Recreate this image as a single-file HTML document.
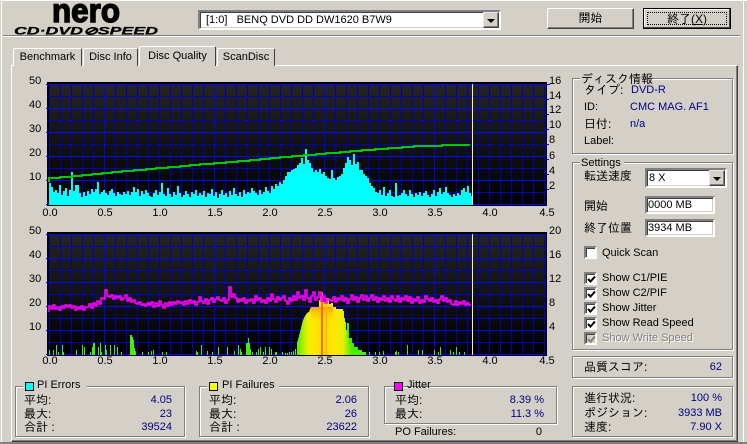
<!DOCTYPE html>
<html><head><meta charset="utf-8"><style>
html,body{margin:0;padding:0}
body{width:747px;height:444px;overflow:hidden;position:relative;background:#d4d0c8;font-family:"Liberation Sans","IPAGothic","Noto Sans CJK JP",sans-serif;font-size:11px;color:#000}
.t{position:absolute;white-space:nowrap;line-height:14px;height:14px}
.j{font-size:12px}
.r{text-align:right}
.b{color:#000080}
.c{text-align:center;width:30px}
.box{position:absolute;box-sizing:border-box}
.g{position:absolute;box-sizing:border-box;border:1px solid #808080;box-shadow:1px 1px 0 #fff,inset 1px 1px 0 #fff}
.gap{position:absolute;background:#d4d0c8;height:3px}
.tab{position:absolute;box-sizing:border-box;background:#d4d0c8;border:1px solid #fff;border-bottom:0;border-right:1px solid #404040;border-radius:2px 2px 0 0;text-align:center;line-height:16px}
.sunk{position:absolute;box-sizing:border-box;background:#fff;border:2px solid;border-color:#808080 #fff #fff #808080;box-shadow:inset 1px 1px 0 #404040,inset -1px -1px 0 #d4d0c8}
.ck{position:absolute;left:584px;width:13px;height:13px;box-sizing:border-box;background:#fff;border:2px solid;border-color:#808080 #fff #fff #808080;box-shadow:inset 1px 1px 0 #404040}
.ck svg{position:absolute;left:1px;top:1px}
.btn{position:absolute;box-sizing:border-box;background:#d4d0c8;border:1px solid;border-color:#fff #404040 #404040 #fff;box-shadow:inset -1px -1px 0 #808080;text-align:center;line-height:18px}
.arr{position:absolute;box-sizing:border-box;background:#d4d0c8;border:1px solid;border-color:#e8e8e8 #404040 #404040 #e8e8e8;box-shadow:inset -1px -1px 0 #808080}
.arr:after{content:"";position:absolute;left:3px;top:6px;border-left:4px solid transparent;border-right:4px solid transparent;border-top:4px solid #000}
.sq{position:absolute;width:7px;height:7px;border:1px solid #000}
</style></head><body>

<!-- window edges -->
<div class="box" style="left:0;top:0;width:747px;height:1px;background:#fff"></div>
<div class="box" style="left:1px;top:0;width:1px;height:444px;background:#fff"></div>
<div class="box" style="left:743px;top:0;width:1px;height:444px;background:#fff"></div>
<div class="box" style="left:3px;top:35px;width:737px;height:1px;background:#808080"></div>
<div class="box" style="left:3px;top:36px;width:737px;height:1px;background:#fff"></div>
<div class="box" style="left:0;top:442px;width:747px;height:2px;background:#808080"></div>

<!-- logo -->
<svg style="position:absolute;left:0;top:0" width="170" height="40">
<text x="52" y="22" font-family="Liberation Sans" font-weight="bold" font-size="33" textLength="68" lengthAdjust="spacingAndGlyphs" stroke="#000" stroke-width="1.4">nero</text>
<text x="14" y="34.500" font-family="Liberation Sans" font-weight="bold" font-style="italic" font-size="11" textLength="144" lengthAdjust="spacingAndGlyphs" stroke="#000" stroke-width=".3">CD·DVD⊘SPEED</text>
</svg>

<!-- drive combo -->
<div class="sunk" style="left:198px;top:10px;width:303px;height:20px"></div>
<div class="arr" style="left:483px;top:12px;width:16px;height:16px"></div>
<div class="t" style="left:206px;top:13px">[1:0]&nbsp;&nbsp;&nbsp;BENQ DVD DD DW1620 B7W9</div>

<!-- buttons -->
<div class="btn j" style="left:547px;top:8px;width:87px;height:21px">開始</div>
<div class="btn j" style="left:643px;top:8px;width:88px;height:21px;border:1px solid #000;box-shadow:inset -1px -1px 0 #404040,inset 1px 1px 0 #fff"><div style="position:absolute;left:3px;top:3px;right:3px;bottom:3px;border:1px dotted #000;line-height:13px">終了(<u>X</u>)</div></div>

<!-- tab page -->
<div class="box" style="left:11px;top:65px;width:727px;height:377px;border:1px solid;border-color:#fff #404040 #404040 #fff;box-shadow:inset -1px -1px 0 #808080"></div>
<div class="tab" style="left:13px;top:48px;width:69px;height:18px">Benchmark</div>
<div class="tab" style="left:83px;top:48px;width:55px;height:18px">Disc Info</div>
<div class="tab" style="left:139px;top:46px;width:77px;height:20px;line-height:18px;border-bottom:0;z-index:2">Disc Quality</div>
<div class="tab" style="left:217px;top:48px;width:58px;height:18px">ScanDisc</div>

<!-- charts -->
<svg style="position:absolute;left:0;top:0" width="747" height="444" shape-rendering="crispEdges">
<defs>
<linearGradient id="bg1" x1="0" y1="84" x2="0" y2="205" gradientUnits="userSpaceOnUse"><stop offset="0" stop-color="#242424"/><stop offset="1" stop-color="#000"/></linearGradient>
<linearGradient id="bg2" x1="0" y1="234" x2="0" y2="355" gradientUnits="userSpaceOnUse"><stop offset="0" stop-color="#242424"/><stop offset="1" stop-color="#000"/></linearGradient>
<pattern id="gr1" patternUnits="userSpaceOnUse" x="49" y="84" width="11" height="12"><rect width="1" height="12" fill="#0000b4"/><rect width="11" height="1" fill="#0000b4"/></pattern>
<pattern id="gr2" patternUnits="userSpaceOnUse" x="49" y="234" width="11" height="12"><rect width="1" height="12" fill="#0000b4"/><rect width="11" height="1" fill="#0000b4"/></pattern>
<linearGradient id="hump" x1="297" y1="0" x2="352" y2="0" gradientUnits="userSpaceOnUse">
<stop offset="0" stop-color="#50f000"/><stop offset=".1" stop-color="#a0f000"/><stop offset=".2" stop-color="#f0f000"/><stop offset=".3" stop-color="#ffe800"/><stop offset=".5" stop-color="#ffd800"/><stop offset=".7" stop-color="#ffe800"/><stop offset=".84" stop-color="#e8f000"/><stop offset=".92" stop-color="#90f000"/><stop offset="1" stop-color="#50f000"/></linearGradient>
<linearGradient id="top" x1="0" y1="307" x2="0" y2="322" gradientUnits="userSpaceOnUse"><stop offset="0" stop-color="#ffa000"/><stop offset="1" stop-color="#ffd800" stop-opacity="0"/></linearGradient>
</defs>
<rect x="47" y="82" width="500" height="124" fill="#000"/>
<rect x="49" y="84" width="497" height="121" fill="url(#bg1)"/>
<rect x="49" y="84" width="497" height="121" fill="url(#gr1)"/>
<rect x="47" y="232" width="500" height="124" fill="#000"/>
<rect x="49" y="234" width="497" height="121" fill="url(#bg2)"/>
<rect x="49" y="234" width="497" height="121" fill="url(#gr2)"/>
<path d="M46 84.500H546M46 108.500H546M46 132.500H546M46 156.500H546M46 180.500H546M46 204.500H546M46 234.500H546M46 258.500H546M46 282.500H546M46 306.500H546M46 330.500H546M46 354.500H546M104.500 84V205M214.500 84V205M324.500 84V205M434.500 84V205M104.500 234V355M214.500 234V355M324.500 234V355M434.500 234V355M546 84.500H550M546 99.500H549M546 114.500H549M546 129.500H549M546 144.500H549M546 159.500H549M546 174.500H549M546 189.500H549" stroke="#0000ff" stroke-width="1" fill="none"/>

<!-- PI errors top -->
<path fill="#00ffff" d="M49 205V183h2V187h2V192h2V190h2V193h2V185h2V195h2V191h2V188h2V196h2V190h2V172h2V191h2V185h2V185h2V193h2V197h2V192h2V196h2V191h2V205Z
M89 205V194h2V189h2V192h2V189h2V182h2V194h2V192h2V190h2V193h2V195h2V191h2V189h2V193h2V196h2V192h2V194h2V195h2V192h2V194h2V191h2V205Z
M129 205V195h2V192h2V187h2V192h2V189h2V196h2V191h2V194h2V190h2V193h2V196h2V197h2V193h2V190h2V195h2V192h2V183h2V194h2V196h2V188h2V205Z
M169 205V194h2V197h2V192h2V195h2V186h2V193h2V197h2V195h2V191h2V194h2V197h2V192h2V194h2V190h2V196h2V193h2V195h2V191h2V197h2V193h2V205Z
M209 205V194h2V189h2V196h2V192h2V198h2V194h2V190h2V195h2V193h2V197h2V191h2V195h2V188h2V194h2V196h2V192h2V197h2V190h2V194h2V192h2V205Z
M249 205V193h2V188h2V191h2V193h2V195h2V190h2V194h2V192h2V187h2V191h2V193h2V186h2V189h2V184h2V186h2V182h2V184h2V180h2V176h2V172h2V205Z
M289 205V172h2V170h2V169h2V168h2V165h2V163h2V158h2V164h2V149h2V160h2V163h2V168h2V172h2V170h2V172h2V169h2V174h2V172h2V176h2V178h2V205Z
M329 205V179h2V170h2V178h2V180h2V177h2V176h2V174h2V168h2V163h2V157h2V160h2V165h2V154h2V164h2V162h2V170h2V170h2V174h2V176h2V178h2V205Z
M369 205V183h2V186h2V188h2V192h2V193h2V190h2V195h2V187h2V196h2V193h2V190h2V196h2V197h2V183h2V196h2V195h2V193h2V190h2V194h2V196h2V205Z
M409 205V190h2V194h2V197h2V193h2V195h2V192h2V196h2V193h2V191h2V195h2V197h2V194h2V190h2V196h2V192h2V188h2V194h2V192h2V187h2V193h2V205Z
M449 205V195h2V197h2V194h2V196h2V193h2V195h2V190h2V188h2V192h2V186h2V193h2V196h2V205Z"/>
<!-- read speed green top -->
<path fill="none" stroke="#00c800" stroke-width="2" d="M49 182V178H60V177H72V176H82V175H92V174H102V173H112V172H122V171H134V170H146V169H156V168H168V167H180V166H190V165H200V164H214V163H226V162H238V161H250V160H260V159H270V158H280V157H292V156H304V155H316V154H326V153H340V152H350V151H362V150H375V149H388V148H402V147H414V146H430V146H442V145H456V145H470"/>

<!-- green PIF bars -->
<path fill="none" stroke="#44f000" stroke-width="1" d="M49.500 355v-5M53.500 355v-5M56.500 355v-10M58.500 355v-3M62.500 355v-10M63.500 355v-3M76.500 355v-5M82.500 355v-10M84.500 355v-8M90.500 355v-3M92.500 355v-8M93.500 355v-12M94.500 355v-12M98.500 355v-8M100.500 355v-12M101.500 355v-3M105.500 355v-10M106.500 355v-5M110.500 355v-10M114.500 355v-10M117.500 355v-8M121.500 355v-3M142.500 355v-3M148.500 355v-3M151.500 355v-4M153.500 355v-5M162.500 355v-3M166.500 355v-3M196.500 355v-4M197.500 355v-3M201.500 355v-10M207.500 355v-4M212.500 355v-3M218.500 355v-8M227.500 355v-8M234.500 355v-4M238.500 355v-10M240.500 355v-6M241.500 355v-3M252.500 355v-3M256.500 355v-3M258.500 355v-6M260.500 355v-8M263.500 355v-3M265.500 355v-8M269.500 355v-8M271.500 355v-6M275.500 355v-3M276.500 355v-3M282.500 355v-3M285.500 355v-2M287.500 355v-2M289.500 355v-3M291.500 355v-3M293.500 355v-4M295.500 355v-6M369.500 355v-3M375.500 355v-3M379.500 355v-3M383.500 355v-4M395.500 355v-3M396.500 355v-4M398.500 355v-3M407.500 355v-10M418.500 355v-5M422.500 355v-5M434.500 355v-5M438.500 355v-3M440.500 355v-8M450.500 355v-5M453.500 355v-3M456.500 355v-8M459.500 355v-3M464.500 355v-3"/>
<path fill="#44f000" d="M130 355V335H132V337H133V340H134V348H135V351H136V355ZM246 355V343H248V338H249V343H250V349H251V355ZM347 355V323H349V338H352V343H354V347H358V350H362V352H366V355Z"/>
<path fill="url(#hump)" d="M297 355V343L299 336 301 328 303 320 305 316 307 313 309 312 311 307H319V300H320V296H323V302H326V305H327V298H329V304H331V303H333V307H336V309H343V311H344V318H345V322H346V330H347V338H349V345H351V355Z"/>
<rect x="311" y="307" width="22" height="15" fill="url(#top)"/>
<rect x="321" y="292" width="2" height="63" fill="#ff6a00"/>
<rect x="326" y="298" width="1" height="57" fill="#ffb000"/>

<!-- jitter -->
<path shape-rendering="auto" fill="none" stroke="#ff00ff" stroke-width="1.6" d="M49 312V306h2V309h2V305h2V309h2V307h2V310h2V306h2V308h2V305h2V307h2V305h2V308h2V306h2V310h2V307h2V309h2V306h2V310h2V307
H89V304h2V308h2V303h2V306h2V301h2V304h2V298h2V299h2V290h2V296h2V297h2V295h2V299h2V296h2V298h2V296h2V300h2V298h2V295h2V301
H129V298h2V302h2V300h2V303h2V304h2V302h2V305h2V304h2V306h2V303h2V305h2V302h2V307h2V303h2V306h2V301h2V305h2V308h2V303h2V306
H169V302h2V305h2V302h2V304h2V301h2V303h2V302h2V305h2V301h2V304h2V300h2V303h2V301h2V305h2V302h2V297h2V301h2V303h2V299h2V304
H209V300h2V298h2V302h2V299h2V297h2V300h2V301h2V298h2V303h2V300h2V287h2V297h2V294h2V298h2V302h2V299h2V301h2V298h2V303h2V300
H249V301h2V299h2V303h2V296h2V300h2V298h2V302h2V300h2V303h2V298h2V301h2V294h2V299h2V302h2V297h2V300h2V298h2V296h2V301h2V304
H289V298h2V301h2V296h2V300h2V292h2V298h2V296h2V300h2V290h2V298h2V302h2V296h2V292h2V300h2V297h2V292h2V301h2V296h2V303h2V299
H329V300h2V301h2V297h2V302h2V298h2V300h2V296h2V301h2V298h2V303h2V299h2V295h2V300h2V297h2V302h2V298h2V295h2V300h2V296h2V301
H369V298h2V295h2V300h2V297h2V302h2V298h2V300h2V296h2V301h2V298h2V302h2V296h2V299h2V301h2V296h2V302h2V298h2V300h2V296h2V301
H409V297h2V303h2V299h2V301h2V297h2V303h2V300h2V302h2V296h2V299h2V301h2V298h2V302h2V300h2V303h2V299h2V296h2V301h2V298h2V302
H449V300h2V304h2V305h2V301h2V305h2V302h2V304h2V301h2V305h2V303h2V305h2"/>

<path d="M472.500 84V205M472.500 234V355" stroke="#f0f0e0" stroke-width="1"/>
</svg>

<!-- axis labels -->
<div class="t" style="left:29px;top:74px">50</div><div class="t" style="left:29px;top:98px">40</div><div class="t" style="left:29px;top:122px">30</div><div class="t" style="left:29px;top:146px">20</div><div class="t" style="left:29px;top:170px">10</div>
<div class="t" style="left:549px;top:74px">16</div><div class="t" style="left:549px;top:89px">14</div><div class="t" style="left:549px;top:103px">12</div><div class="t" style="left:549px;top:118px">10</div><div class="t" style="left:549px;top:133px">8</div><div class="t" style="left:549px;top:149px">6</div><div class="t" style="left:549px;top:164px">4</div><div class="t" style="left:549px;top:179px">2</div>
<div class="t c" style="left:35px;top:206px">0.0</div><div class="t c" style="left:90px;top:206px">0.5</div><div class="t c" style="left:145px;top:206px">1.0</div><div class="t c" style="left:200px;top:206px">1.5</div><div class="t c" style="left:255px;top:206px">2.0</div><div class="t c" style="left:310px;top:206px">2.5</div><div class="t c" style="left:365px;top:206px">3.0</div><div class="t c" style="left:420px;top:206px">3.5</div><div class="t c" style="left:475px;top:206px">4.0</div><div class="t c" style="left:532px;top:206px">4.5</div>
<div class="t" style="left:29px;top:224px">50</div><div class="t" style="left:29px;top:248px">40</div><div class="t" style="left:29px;top:272px">30</div><div class="t" style="left:29px;top:296px">20</div><div class="t" style="left:29px;top:320px">10</div>
<div class="t" style="left:549px;top:224px">20</div><div class="t" style="left:549px;top:248px">16</div><div class="t" style="left:549px;top:272px">12</div><div class="t" style="left:549px;top:296px">8</div><div class="t" style="left:549px;top:320px">4</div>
<div class="t c" style="left:35px;top:354px">0.0</div><div class="t c" style="left:90px;top:354px">0.5</div><div class="t c" style="left:145px;top:354px">1.0</div><div class="t c" style="left:200px;top:354px">1.5</div><div class="t c" style="left:255px;top:354px">2.0</div><div class="t c" style="left:310px;top:354px">2.5</div><div class="t c" style="left:365px;top:354px">3.0</div><div class="t c" style="left:420px;top:354px">3.5</div><div class="t c" style="left:475px;top:354px">4.0</div><div class="t c" style="left:532px;top:354px">4.5</div>

<!-- disc info group -->
<div class="g" style="left:572px;top:78px;width:161px;height:76px"></div>
<div class="gap" style="left:580px;top:77px;width:63px"></div>
<div class="t j" style="left:581px;top:72px">ディスク情報</div>
<div class="t j" style="left:584px;top:83px">タイプ:</div><div class="t b" style="left:631px;top:83px">DVD-R</div>
<div class="t" style="left:584px;top:100px">ID:</div><div class="t b" style="left:630px;top:100px">CMC MAG. AF1</div>
<div class="t j" style="left:584px;top:117px">日付:</div><div class="t b" style="left:630px;top:117px">n/a</div>
<div class="t" style="left:584px;top:134px">Label:</div>

<!-- settings group -->
<div class="g" style="left:572px;top:162px;width:161px;height:188px"></div>
<div class="gap" style="left:580px;top:161px;width:44px"></div>
<div class="t" style="left:581px;top:156px">Settings</div>
<div class="t j" style="left:584px;top:169px">転送速度</div>
<div class="sunk" style="left:645px;top:168px;width:82px;height:20px"></div>
<div class="arr" style="left:709px;top:170px;width:16px;height:16px"></div>
<div class="t" style="left:649px;top:171px">8 X</div>
<div class="t j" style="left:584px;top:199px">開始</div>
<div class="sunk" style="left:645px;top:196px;width:70px;height:18px"></div>
<div class="t" style="left:648px;top:198px">0000 MB</div>
<div class="t j" style="left:584px;top:221px">終了位置</div>
<div class="sunk" style="left:645px;top:219px;width:70px;height:18px"></div>
<div class="t" style="left:648px;top:221px">3934 MB</div>

<div class="ck" style="top:246px"></div><div class="t" style="left:602px;top:246px">Quick Scan</div>
<div class="ck" style="top:272px"><svg width="9" height="9"><path d="M1 4L3.500 6.500 8 1.500" fill="none" stroke="#000" stroke-width="2"/></svg></div><div class="t" style="left:602px;top:271px">Show C1/PIE</div>
<div class="ck" style="top:287px"><svg width="9" height="9"><path d="M1 4L3.500 6.500 8 1.500" fill="none" stroke="#000" stroke-width="2"/></svg></div><div class="t" style="left:602px;top:286px">Show C2/PIF</div>
<div class="ck" style="top:302px"><svg width="9" height="9"><path d="M1 4L3.500 6.500 8 1.500" fill="none" stroke="#000" stroke-width="2"/></svg></div><div class="t" style="left:602px;top:301px">Show Jitter</div>
<div class="ck" style="top:317px"><svg width="9" height="9"><path d="M1 4L3.500 6.500 8 1.500" fill="none" stroke="#000" stroke-width="2"/></svg></div><div class="t" style="left:602px;top:316px">Show Read Speed</div>
<div class="ck" style="top:332px;background:#d4d0c8"><svg width="9" height="9"><path d="M1 4L3.500 6.500 8 1.500" fill="none" stroke="#808080" stroke-width="2"/></svg></div><div class="t" style="left:602px;top:331px;color:#808080;text-shadow:1px 1px 0 #fff">Show Write Speed</div>

<!-- score -->
<div class="g" style="left:572px;top:356px;width:161px;height:22px"></div>
<div class="t j" style="left:584px;top:360px">品質スコア:</div><div class="t b r" style="left:672px;top:360px;width:50px">62</div>

<!-- progress -->
<div class="g" style="left:572px;top:386px;width:161px;height:51px"></div>
<div class="t j" style="left:584px;top:391px">進行状況:</div><div class="t b r" style="left:672px;top:391px;width:50px">100 %</div>
<div class="t j" style="left:584px;top:406px">ポジション:</div><div class="t b r" style="left:672px;top:406px;width:50px">3933 MB</div>
<div class="t j" style="left:584px;top:420px">速度:</div><div class="t b r" style="left:672px;top:420px;width:50px">7.90 X</div>

<!-- PI Errors -->
<div class="g" style="left:15px;top:386px;width:170px;height:51px"></div>
<div class="gap" style="left:23px;top:385px;width:64px"></div>
<div class="sq" style="left:25px;top:382px;background:#00ffff"></div>
<div class="t" style="left:37px;top:378px">PI Errors</div>
<div class="t j" style="left:24px;top:393px">平均:</div><div class="t b r" style="left:122px;top:393px;width:50px">4.05</div>
<div class="t j" style="left:24px;top:407px">最大:</div><div class="t b r" style="left:122px;top:407px;width:50px">23</div>
<div class="t j" style="left:24px;top:420px">合計 :</div><div class="t b r" style="left:122px;top:420px;width:50px">39524</div>

<!-- PI Failures -->
<div class="g" style="left:199px;top:386px;width:170px;height:51px"></div>
<div class="gap" style="left:207px;top:385px;width:72px"></div>
<div class="sq" style="left:209px;top:382px;background:#ffff00"></div>
<div class="t" style="left:222px;top:378px">PI Failures</div>
<div class="t j" style="left:209px;top:393px">平均:</div><div class="t b r" style="left:307px;top:393px;width:50px">2.06</div>
<div class="t j" style="left:209px;top:407px">最大:</div><div class="t b r" style="left:307px;top:407px;width:50px">26</div>
<div class="t j" style="left:209px;top:420px">合計 :</div><div class="t b r" style="left:307px;top:420px;width:50px">23622</div>

<!-- Jitter -->
<div class="g" style="left:384px;top:386px;width:173px;height:38px"></div>
<div class="sq" style="left:394px;top:382px;background:#ff00ff"></div>
<div class="t" style="left:407px;top:378px">Jitter</div>
<div class="t j" style="left:395px;top:393px">平均:</div><div class="t b r" style="left:494px;top:393px;width:50px">8.39 %</div>
<div class="t j" style="left:395px;top:407px">最大:</div><div class="t b r" style="left:494px;top:407px;width:50px">11.3 %</div>
<div class="t" style="left:395px;top:425px">PO Failures:</div><div class="t r" style="left:492px;top:425px;width:50px">0</div>

</body></html>
